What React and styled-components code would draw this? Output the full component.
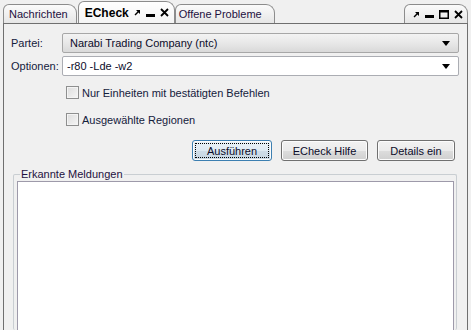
import React from 'react';
import styled, { createGlobalStyle } from 'styled-components';

const GlobalStyle = createGlobalStyle`
  body {
    margin: 0;
    background: #f0f0f0;
    font-family: "Liberation Sans", Arial, sans-serif;
    font-size: 11px;
  }
`;

const Window = styled.div`
  width: 471px;
  height: 330px;
  overflow: hidden;
  background: #f0f0f0;
  display: flex;
  flex-direction: column;
  color: #000;
`;

const TabBar = styled.div`
  height: 24px;
  display: flex;
  align-items: flex-end;
  margin: 0 3px;
  border-bottom: 1px solid #6f6f6f;
  box-sizing: border-box;
`;

const Tab = styled.div`
  height: ${p => (p.$active ? 22 : 19)}px;
  box-sizing: border-box;
  display: flex;
  align-items: center;
  gap: 5px;
  padding: 0 ${p => p.$padRight || 6}px 0 ${p => p.$padLeft || 4}px;
  margin-left: ${p => p.$offset || 0}px;
  border: 1px solid #8c8c8c;
  border-bottom: none;
  border-radius: 6px 9px 0 0;
  background: ${p =>
    p.$active
      ? 'linear-gradient(#ffffff, #f4f4f4)'
      : 'linear-gradient(#fbfbfb, #e6e6e6)'};
  font-weight: ${p => (p.$active ? 'bold' : 'normal')};
  font-size: ${p => (p.$active ? 12 : 11)}px;
  color: ${p => (p.$active ? '#000' : '#1e1040')};
  white-space: nowrap;
`;

const Spacer = styled.div`
  flex: 1;
`;

const Icons = styled.div`
  display: flex;
  align-items: center;
  gap: ${p => p.$gap || 5}px;
`;

const Panel = styled.div`
  flex: 1;
  margin: 0 3px;
  border-left: 1px solid #6f6f6f;
  border-right: 1px solid #6f6f6f;
  padding: 9px 8px 0 7px;
  display: flex;
  flex-direction: column;
  min-height: 0;
`;

const FormRow = styled.div`
  display: flex;
  align-items: center;
  margin-bottom: ${p => p.$gap || 3}px;
`;

const Label = styled.span`
  width: 51px;
  color: #14203c;
`;

const Combo = styled.div`
  flex: 1;
  height: 20px;
  box-sizing: border-box;
  display: flex;
  align-items: center;
  padding: 0 8px 0 ${p => (p.$editable ? 4 : 7)}px;
  border: 1px solid ${p => (p.$editable ? '#abadb3' : '#a7a7a7')};
  border-radius: 2px;
  background: ${p =>
    p.$editable ? '#ffffff' : 'linear-gradient(#f3f3f3, #e8e8e8 50%, #d9d9d9)'};
  color: #0c0c2a;
`;

const ComboText = styled.span`
  flex: 1;
`;

const Arrow = styled.span`
  width: 0;
  height: 0;
  border-left: 4px solid transparent;
  border-right: 4px solid transparent;
  border-top: 5px solid #000;
`;

const CheckRow = styled.label`
  display: flex;
  align-items: center;
  gap: 3px;
  margin-left: 55px;
  height: 13px;
  margin-top: ${p => p.$top}px;
  color: #14203c;
`;

const Box = styled.span`
  width: 13px;
  height: 13px;
  box-sizing: border-box;
  border: 1px solid #8e8f8f;
  background: linear-gradient(135deg, #dcdcdc, #f6f6f6);
  box-shadow: inset 0 0 0 1px #f4f4f4;
`;

const ButtonRow = styled.div`
  display: flex;
  justify-content: flex-end;
  gap: 9px;
  margin-top: 14px;
  padding-right: 4px;
`;

const Button = styled.div`
  height: 21px;
  width: ${p => p.$w}px;
  box-sizing: border-box;
  display: flex;
  align-items: center;
  justify-content: center;
  border: 1px solid ${p => (p.$default ? '#3c7fb1' : '#707070')};
  border-radius: 3px;
  background: ${p =>
    p.$default
      ? 'linear-gradient(#eaf3f8 0%, #dfeaf2 50%, #cfdde8 51%, #c7d6e2 100%)'
      : 'linear-gradient(#f2f2f2 0%, #ebebeb 50%, #dddddd 51%, #cfcfcf 100%)'};
  box-shadow: inset 0 0 0 1px #fcfcfc;
  position: relative;
  color: #0c0c2a;

  ${p =>
    p.$default &&
    `&::after {
      content: '';
      position: absolute;
      inset: 2px;
      border: 1px dotted #000;
    }`}
`;

const Group = styled.fieldset`
  flex: 1;
  margin: 7px 2px 0 2px;
  padding: 0 2px 0 3px;
  border: 1px solid #c9ced2;
  border-bottom: none;
  border-radius: 2px;
  display: flex;
  min-height: 0;
`;

const Legend = styled.legend`
  padding: 0 1px;
  margin-left: 3px;
  color: #1e1040;
`;

const List = styled.div`
  flex: 1;
  margin-top: 1px;
  background: #ffffff;
  border: 1px solid #9e9aaa;
  border-bottom: none;
`;

const PinIcon = () => (
  <svg width="7" height="7" viewBox="0 0 7 7">
    <path d="M2 1H6V5L4.5 3.5L1.5 6.5L0.5 5.5L3.5 2.5Z" fill="#000" />
  </svg>
);

const MinIcon = () => (
  <svg width="9" height="8" viewBox="0 0 9 8">
    <rect x="0" y="5" width="9" height="3" fill="#000" />
  </svg>
);

const MaxIcon = () => (
  <svg width="10" height="9" viewBox="0 0 10 9">
    <rect x="0.75" y="0.75" width="8.5" height="7.5" fill="none" stroke="#000" strokeWidth="1.5" />
    <rect x="0" y="0" width="10" height="2.5" fill="#000" />
  </svg>
);

const CloseIcon = () => (
  <svg width="9" height="9" viewBox="0 0 9 9">
    <path d="M1 1L8 8M8 1L1 8" stroke="#000" strokeWidth="1.8" />
  </svg>
);

const App = () => {
  return (
    <Window>
      <GlobalStyle />
      <TabBar>
        <Tab $padLeft={5} $padRight={8}>Nachrichten</Tab>
        <Tab $active $offset={1} $padLeft={6} $padRight={5}>
          ECheck
          <Icons $gap={5}>
            <PinIcon />
            <MinIcon />
            <CloseIcon />
          </Icons>
        </Tab>
        <Tab $padLeft={3} $padRight={12}>Offene Probleme</Tab>
        <Spacer />
        <Tab $padLeft={8} $padRight={4}>
          <Icons $gap={5}>
            <PinIcon />
            <MinIcon />
            <MaxIcon />
            <CloseIcon />
          </Icons>
        </Tab>
      </TabBar>
      <Panel>
        <FormRow $gap={3}>
          <Label>Partei:</Label>
          <Combo>
            <ComboText>Narabi Trading Company (ntc)</ComboText>
            <Arrow />
          </Combo>
        </FormRow>
        <FormRow>
          <Label>Optionen:</Label>
          <Combo $editable>
            <ComboText>-r80 -Lde -w2</ComboText>
            <Arrow />
          </Combo>
        </FormRow>
        <CheckRow $top={7}>
          <Box />
          Nur Einheiten mit bestätigten Befehlen
        </CheckRow>
        <CheckRow $top={14}>
          <Box />
          Ausgewählte Regionen
        </CheckRow>
        <ButtonRow>
          <Button $default $w={80}>Ausführen</Button>
          <Button $w={87}>ECheck Hilfe</Button>
          <Button $w={78}>Details ein</Button>
        </ButtonRow>
        <Group>
          <Legend>Erkannte Meldungen</Legend>
          <List />
        </Group>
      </Panel>
    </Window>
  );
};

export default App;
